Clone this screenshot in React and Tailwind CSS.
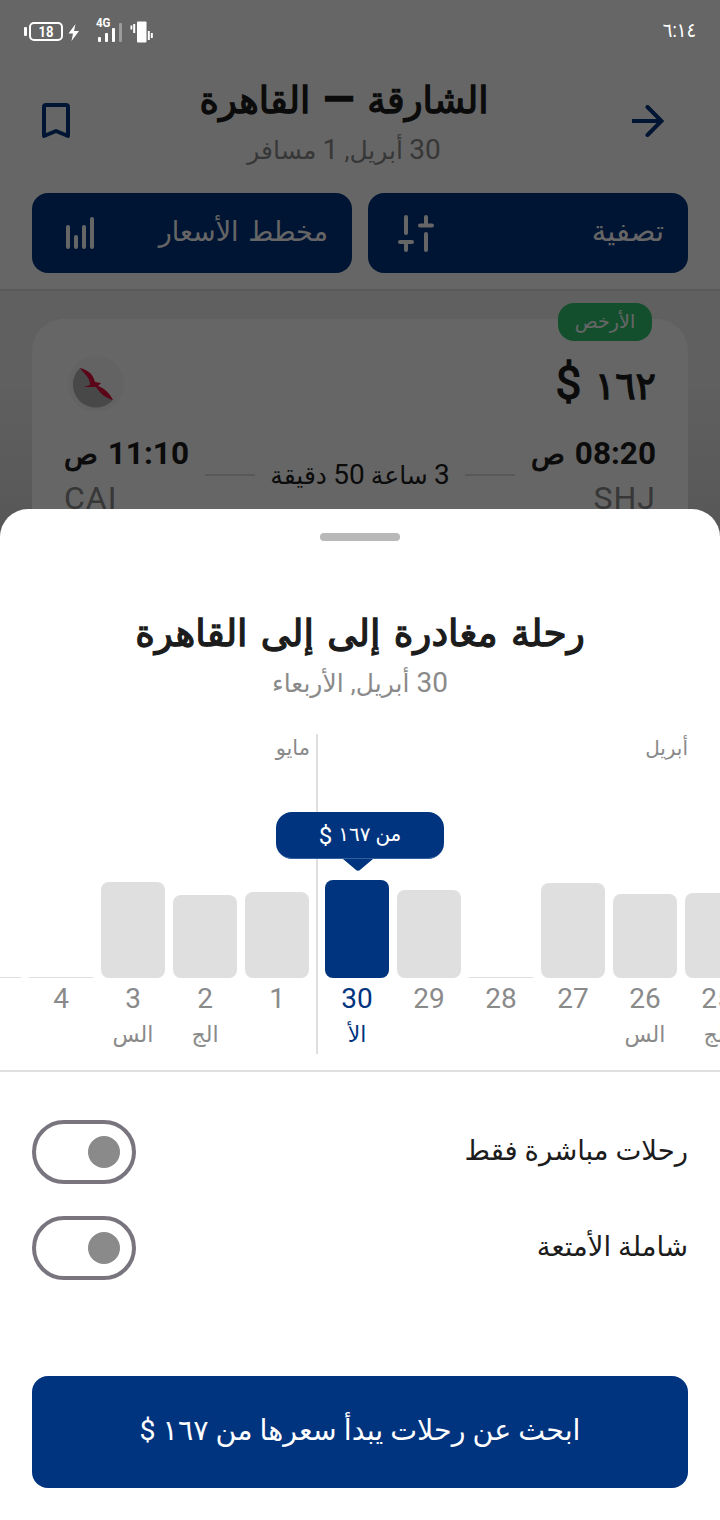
import React, { useState } from 'react'

const april = [
    { day: '25', week: 'الج', height: 'h-[85px]' },
    { day: '26', week: 'الس', height: 'h-[84px]' },
    { day: '27', week: '', height: 'h-[95px]' },
    { day: '28', week: '', height: 'h-px' },
    { day: '29', week: '', height: 'h-[88px]' },
    { day: '30', week: 'الأ', height: 'h-[98px]' },
]

const may = [
    { day: '1', week: '', height: 'h-[86px]' },
    { day: '2', week: 'الج', height: 'h-[83px]' },
    { day: '3', week: 'الس', height: 'h-[96px]' },
    { day: '4', week: '', height: 'h-px' },
    { day: '5', week: '', height: 'h-px' },
]

const StatusBar = () => (
    <div dir="ltr" className="absolute inset-x-0 top-0 z-10 flex h-16 items-start pl-6 pr-6 text-white">
        {/* battery */}
        <svg className="mt-5 shrink-0" width="60" height="24" viewBox="0 0 60 24" fill="none">
            <rect x="0" y="7" width="3" height="9" rx="1" fill="white" />
            <rect x="6" y="3" width="32" height="17" rx="4" stroke="white" strokeWidth="2" />
            <text x="14.5" y="17" fill="white" fontSize="15.5" fontWeight="700" textLength="15" lengthAdjust="spacingAndGlyphs" fontFamily="Roboto">18</text>
            <path d="M51.5 4L44.5 13.5H49L47.5 21L55 11H50Z" fill="white" />
        </svg>
        {/* signal */}
        <svg className="ml-3 mt-4 shrink-0" width="28" height="28" viewBox="0 0 28 28">
            <text x="0" y="11" fill="white" fontSize="12.5" fontWeight="700" textLength="14.5" lengthAdjust="spacingAndGlyphs" fontFamily="Roboto">4G</text>
            <rect x="2" y="21" width="3" height="5" rx="1" fill="white" />
            <rect x="9" y="17" width="3" height="9" rx="1" fill="white" />
            <rect x="16" y="12" width="3" height="14" rx="1" fill="white" />
            <rect x="23" y="7" width="3" height="19" rx="1" fill="white" fillOpacity="0.35" />
        </svg>
        {/* vibration */}
        <svg className="ml-1.5 mt-5 shrink-0" width="24" height="24" viewBox="0 0 24 24" fill="white">
            <rect x="0.5" y="5.5" width="1.8" height="4" />
            <rect x="3.2" y="4" width="2" height="9" />
            <rect x="7" y="1.5" width="9.5" height="21" rx="1" />
            <rect x="17.8" y="11" width="2" height="9" />
            <rect x="20.8" y="13" width="2" height="5" />
        </svg>
        <span className="ml-auto mt-[18px] origin-right scale-x-90 text-[20px] leading-6">٦:١٤</span>
    </div>
)

const Day = ({ item, active, onClick }) => (
    <button onClick={onClick} className={`flex w-16 shrink-0 flex-col items-center ${active ? 'text-[#00347f]' : 'text-[#8a8a8a]'}`}>
        <span className="flex h-[244px] w-full items-end">
            <span className={`w-full ${item.height === 'h-px' ? '' : 'rounded-lg'} ${item.height} ${active ? 'bg-[#00347f]' : 'bg-[#dfdfdf]'}`}></span>
        </span>
        <span className="mt-[5px] h-8 text-[28px] leading-8">{item.day}</span>
        <span className="mt-1 h-8 text-[22px] leading-8">{item.week}</span>
    </button>
)

const Toggle = ({ label }) => {
    const [on, setOn] = useState(false)

    return (
        <div className="flex h-16 items-center justify-between">
            <span className="-mt-0.5 text-[27.5px] leading-10 text-[#1c1c1c]">{label}</span>
            <button onClick={() => setOn(!on)} className={`flex h-16 w-26 items-center rounded-full border-4 border-[#79747e] px-3 ${on ? 'justify-end' : 'justify-start'}`}>
                <span className="size-8 rounded-full bg-[#8a8a8a]"></span>
            </button>
        </div>
    )
}

const App = () => {
    const [selected, setSelected] = useState('30')

    return (
        <div dir="rtl" className="relative h-[1520px] w-[720px] overflow-hidden bg-white font-['Roboto','DejaVu_Sans',sans-serif]">
            <StatusBar />

            {/* search results */}
            <div className="relative h-[549px] overflow-hidden bg-linear-to-b from-[#efefef] from-70% to-[#d8d8d8]">
                <div className="h-[291px] border-b-2 border-[#dcdcdc] bg-white pt-16">

                    {/* route */}
                    <div className="flex h-[129px] items-start pl-10 pr-14">
                        <svg className="mt-[41px] shrink-0" width="32" height="32" viewBox="0 0 32 32" fill="none" stroke="#00347f" strokeWidth="4">
                            <path d="M0 16H29" />
                            <path d="M15.5 2L29.5 16L15.5 30" strokeLinecap="round" />
                        </svg>
                        <div className="flex-1 pr-4 text-center">
                            <h1 className="mt-3 h-12 pl-0 text-[37px] leading-12 text-[#1c1c1c] [word-spacing:4px] [-webkit-text-stroke:1.3px_#1c1c1c]">الشارقة <span className="text-[40px] font-bold">—</span> القاهرة</h1>
                            <p className="mt-1.5 h-10 text-[25px] leading-10 text-[#8a8a8a]"><span className="text-[28px]">30</span> أبريل, <span className="text-[28px]">1</span> مسافر</p>
                        </div>
                        <svg className="mt-[37px] shrink-0" width="32" height="40" viewBox="0 0 32 40" fill="none" stroke="#00347f" strokeWidth="4" strokeLinejoin="round">
                            <path d="M4 6Q4 4 6 4H26Q28 4 28 6V35L16 30L4 35Z" />
                        </svg>
                    </div>

                    {/* actions */}
                    <div className="grid grid-cols-2 gap-4 px-8 text-white">
                        <button className="flex h-20 items-center justify-between rounded-2xl bg-[#00347f] pl-7 pr-6">
                            <span className="-mt-0.5 text-[29px]">تصفية</span>
                            <svg width="40" height="40" viewBox="0 0 40 40" fill="none" stroke="white" strokeWidth="4" strokeLinecap="round">
                                <path d="M10 4V20" />
                                <path d="M10 31V37M4 29H16" />
                                <path d="M30 4V10M24 12.5H36" />
                                <path d="M30 21V37" />
                            </svg>
                        </button>
                        <button className="flex h-20 items-center justify-between rounded-2xl bg-[#00347f] pl-8 pr-6">
                            <span className="-mt-0.5 text-[27px] [word-spacing:3px]">مخطط الأسعار</span>
                            <svg width="32" height="32" viewBox="0 0 32 32" fill="none" stroke="white" strokeWidth="4" strokeLinecap="round">
                                <path d="M4 10V30M12 20V30M20 10V30M28 2V30" />
                            </svg>
                        </button>
                    </div>
                </div>

                {/* cheapest ticket */}
                <div className="relative mx-8 mt-7 h-[300px] rounded-[32px] bg-white px-8 pt-9">
                    <span className="absolute -top-4 right-9 flex h-[38px] w-[94px] items-center justify-center rounded-2xl bg-[#32c671] text-[19px] text-white">الأرخص</span>
                    <div className="flex h-14 items-center justify-between">
                        <span className="text-[38px] text-[#1c1c1c] [word-spacing:4px] [-webkit-text-stroke:1.3px_#1c1c1c]">١٦٢ <span className="text-[46px]">$</span></span>
                        <svg width="64" height="56" viewBox="0 0 64 56">
                            <circle cx="32" cy="29" r="28" fill="#f7f7f7" />
                            <path d="M16 13A23 23 0 1 0 49 45Z" fill="#b4b4b4" />
                            <path d="M16 13C24 15 29 19 31 27L37 28L34 31C42 34 46 39 49 45C41 43 37 39 32 32L20 32L26 30C26 22 20 19 16 13Z" fill="#e0103c" />
                        </svg>
                    </div>
                    <div className="mt-[21px] flex justify-between text-[#1c1c1c]">
                        <div>
                            <p className="h-11 text-[28px] leading-11 [word-spacing:3px] [-webkit-text-stroke:1px_#1c1c1c]"><span className="text-[31.5px] font-bold [-webkit-text-stroke:0]">08:20</span> ص</p>
                            <p className="text-[32px] leading-11 tracking-[1px] text-[#8a8a8a]">SHJ</p>
                        </div>
                        <div className="absolute inset-x-[173px] top-[134px] flex h-11 items-center justify-between">
                            <span className="h-0.5 w-[50px] bg-[#dcdcdc]"></span>
                            <span className="text-[25px]"><span className="text-[28px]">3</span> ساعة <span className="text-[28px]">50</span> دقيقة</span>
                            <span className="h-0.5 w-[50px] bg-[#dcdcdc]"></span>
                        </div>
                        <div>
                            <p className="h-11 text-[28px] leading-11 [word-spacing:3px] [-webkit-text-stroke:1px_#1c1c1c]"><span className="text-[31.5px] font-bold [-webkit-text-stroke:0]">11:10</span> ص</p>
                            <p className="text-left text-[32px] leading-11 tracking-[1px] text-[#8a8a8a]">CAI</p>
                        </div>
                    </div>
                </div>

                {/* backdrop */}
                <div className="absolute inset-0 bg-black/60"></div>
            </div>

            {/* bottom sheet */}
            <div className="relative -mt-10 h-[1011px] rounded-t-[28px] bg-white pt-6">
                <div className="mx-auto h-2 w-20 rounded-full bg-[#b8b8b8]"></div>

                <div className="mt-[68px] text-center">
                    <h2 className="h-12 text-[37.5px] leading-12 text-[#1c1c1c] [word-spacing:4px] [-webkit-text-stroke:1.3px_#1c1c1c]">رحلة مغادرة إلى إلى القاهرة</h2>
                    <p className="mt-2.5 h-8 text-[25px] leading-8 text-[#8a8a8a] [word-spacing:1px]"><span className="text-[28px]">30</span> أبريل, الأربعاء</p>
                </div>

                {/* price chart */}
                <div className="relative mt-[35px] h-[338px] overflow-hidden border-b-2 border-[#dfdfdf]">
                    <div className="-mr-[29px] flex h-80">
                        <div className="relative flex shrink-0 gap-2">
                            <span className="absolute right-[61px] top-0 text-[20px] leading-7 text-[#8a8a8a]">أبريل</span>
                            {april.map((item) => (
                                <Day key={item.day} item={item} active={item.day === selected} onClick={() => setSelected(item.day)} />
                            ))}
                        </div>
                        <div className="mx-[7px] w-0.5 shrink-0 bg-[#dfdfdf]"></div>
                        <div className="relative flex shrink-0 gap-2">
                            <span className="absolute -right-px top-0 text-[21px] leading-7 text-[#8a8a8a]">مايو</span>
                            {may.map((item) => (
                                <Day key={item.day} item={item} active={item.day === selected} onClick={() => setSelected(item.day)} />
                            ))}
                        </div>
                    </div>

                    {/* price bubble */}
                    <div className="absolute left-[276px] top-[78px] flex w-[168px] flex-col items-center">
                        <span className="flex h-[47px] w-full items-center justify-center rounded-2xl border-b border-[#33609f] bg-[#00347f] pb-0.5 text-[20px] text-white">من ١٦٧ <span className="mr-1.5 mt-1 text-[24px] leading-7">$</span></span>
                        <svg className="-translate-x-0.5" width="30" height="12" viewBox="0 0 30 12" fill="#00347f">
                            <path d="M0 0H30L17.5 10.5Q15 13 12.5 10.5Z" />
                        </svg>
                    </div>
                </div>

                {/* filters */}
                <div className="mt-12 flex flex-col gap-8 px-8">
                    <Toggle label="رحلات مباشرة فقط" />
                    <Toggle label="شاملة الأمتعة" />
                </div>

                {/* submit */}
                <div className="mt-24 px-8">
                    <button className="flex h-28 w-full items-center justify-center rounded-2xl bg-[#00347f] pb-0.5 text-[28.5px] text-white">ابحث عن رحلات يبدأ سعرها من ١٦٧ $</button>
                </div>
            </div>
        </div>
    )
}

export default App
